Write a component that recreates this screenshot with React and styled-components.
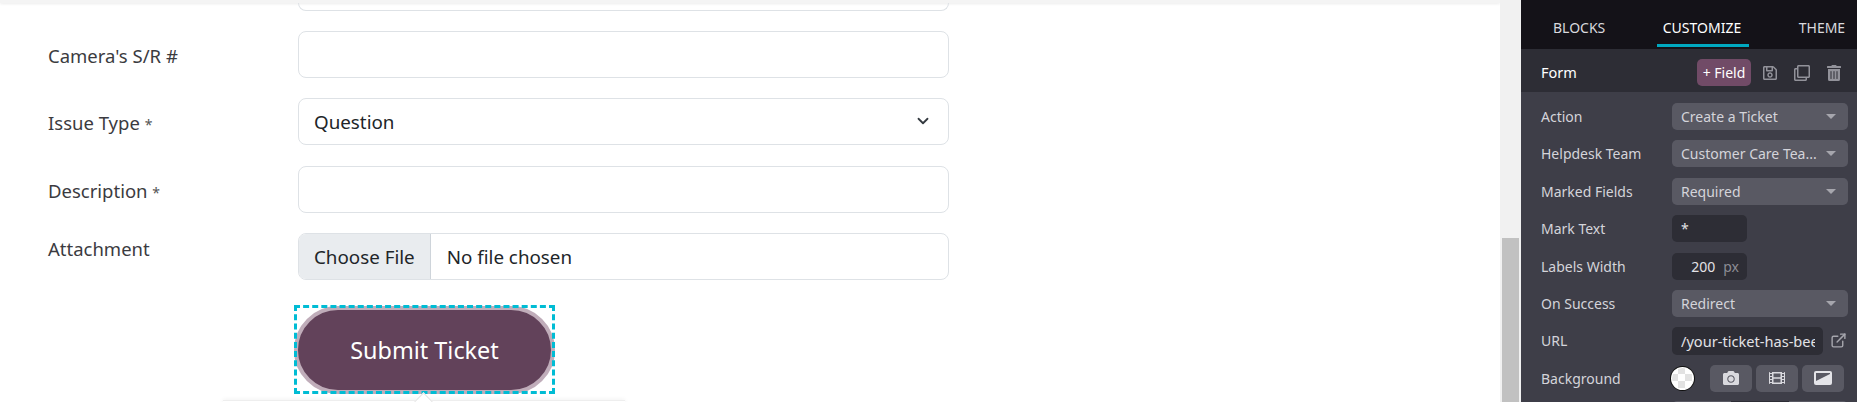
import React from 'react';
import styled, { createGlobalStyle } from 'styled-components';
import { ExternalLink, ChevronDown } from 'lucide-react';
import { FaRegSave, FaRegClone, FaTrashAlt, FaCamera, FaFilm } from 'react-icons/fa';

const Global = createGlobalStyle`
    html, body { margin: 0; padding: 0; background: #fff; }
    * { box-sizing: border-box; }
`;

const Page = styled.div`
    display: grid;
    grid-template-columns: 1fr 21px 336px;
    width: 1857px;
    height: 402px;
    overflow: hidden;
    font-family: 'Noto Sans', 'Open Sans', sans-serif;
`;

const Main = styled.div`
    position: relative;
    overflow: hidden;
    background: #fff;
`;

const TopBar = styled.div`
    height: 3px;
    background: #f4f4f4;
    box-shadow: 0 1px 3px rgba(0, 0, 0, 0.08);
`;

const Form = styled.div`
    display: flex;
    flex-direction: column;
    gap: 20.4px;
    padding-left: 48px;
`;

const Row = styled.div`
    display: flex;
    align-items: ${(p) => (p.$top ? 'flex-start' : 'center')};
    height: 47px;
`;

const Label = styled.div`
    width: 250px;
    font-size: 18.5px;
    color: #3b3b3f;
    padding-top: ${(p) => (p.$top ? '3px' : '2px')};

    span {
        font-size: 14px;
        color: #555;
    }
`;

const Cut = styled.div`
    width: 651px;
    height: 7.6px;
    margin-left: 250px;
    border: 1px solid #dee2e6;
    border-top: none;
    border-radius: 0 0 8px 8px;
`;

const Field = styled.div`
    width: 651px;
    height: 47px;
    display: flex;
    align-items: center;
    justify-content: space-between;
    padding: 1px 16px 0 15px;
    border: 1px solid #dee2e6;
    border-radius: 8px;
    font-size: 18.8px;
    color: #212529;
    overflow: hidden;

    svg {
        margin-top: -3px;
    }
`;

const FileField = styled(Field)`
    justify-content: flex-start;
    padding: 0;
`;

const FileButton = styled.div`
    height: 100%;
    display: flex;
    align-items: center;
    padding: 0 15px;
    background: #e9ecef;
    border-right: 1px solid #ced4da;
    margin-right: 16px;
`;

const ButtonRow = styled.div`
    padding: 25px 0 0 294px;
`;

const Dashed = styled.div`
    width: 261px;
    height: 89px;
    padding-top: 1px;
    outline: 3px dashed #00bcd4;
    outline-offset: -3px;
`;

const SubmitButton = styled.div`
    height: 100%;
    border: 4px solid #c0adba;
    border-radius: 44px;
    background: #62425a;
    color: #fff;
    font-size: 23.4px;
    display: flex;
    align-items: center;
    justify-content: center;
`;

const Popover = styled.div`
    position: absolute;
    left: 223px;
    top: 400px;
    width: 402px;
    height: 10px;
    background: #fff;
    border-top: 1px solid #eee;
    box-shadow: 0 -1px 4px rgba(0, 0, 0, 0.05);
`;

const Arrow = styled.div`
    position: absolute;
    left: 194px;
    top: -6px;
    width: 13px;
    height: 13px;
    background: #fff;
    border-top: 1px solid #e4e4e4;
    border-left: 1px solid #e4e4e4;
    transform: rotate(45deg);
`;

const Scrollbar = styled.div`
    display: flex;
    flex-direction: column;
    justify-content: flex-end;
    padding: 0 2px;
    background: #f1f1f1;
`;

const Thumb = styled.div`
    height: 164px;
    background: #c1c1c1;
`;

const Panel = styled.div`
    background: #3e3e48;
    color: #d9d9de;
    font-size: 14px;
    overflow: hidden;
`;

const Tabs = styled.div`
    height: 49px;
    display: flex;
    background: #141218;
    padding-left: 32px;
`;

const Tab = styled.div`
    position: relative;
    width: ${(p) => p.$w}px;
    padding-top: 18px;
    font-size: 14px;
    white-space: nowrap;
    color: ${(p) => (p.$active ? '#fff' : '#d9d9de')};

    ${(p) => p.$active && `
        &::after {
            content: '';
            position: absolute;
            left: -6px;
            bottom: 2px;
            width: 92px;
            height: 3px;
            background: #00a8c0;
        }
    `}
`;

const Header = styled.div`
    height: 43px;
    display: flex;
    align-items: center;
    padding: 4px 15px 0 20px;
    background: #2d2d35;
    color: #fff;
`;

const Title = styled.div`
    flex: 1;
    margin-top: -2px;
    font-size: 14.5px;
`;

const FieldButton = styled.div`
    width: 54px;
    height: 27px;
    display: flex;
    align-items: center;
    justify-content: center;
    margin-right: 11px;
    border-radius: 5px;
    background: #714b67;
    font-size: 14px;
`;

const HeadIcons = styled.div`
    display: flex;
    align-items: center;
    gap: 16px;
    color: #92929a;
`;

const Options = styled.div`
    display: flex;
    flex-direction: column;
    gap: 10.4px;
    padding: 11px 9px 0 20px;
`;

const Option = styled.div`
    display: flex;
    flex: none;
    align-items: center;
    height: 27px;
`;

const OptionLabel = styled.div`
    width: 131px;
    font-size: 14px;
    color: #d4d4da;
`;

const Select = styled.div`
    width: 176px;
    height: 27px;
    display: flex;
    align-items: center;
    justify-content: space-between;
    padding: 0 6px 0 9px;
    border-radius: 5px;
    background: #595963;
    color: #d4d4da;
    font-size: 14px;
    white-space: nowrap;
`;

const Caret = styled.i`
    width: 0;
    height: 0;
    margin-right: 6px;
    border-left: 5px solid transparent;
    border-right: 5px solid transparent;
    border-top: 5px solid #a6a6ad;
`;

const TextBox = styled.div`
    width: ${(p) => p.$w}px;
    height: 27px;
    display: flex;
    align-items: center;
    justify-content: ${(p) => (p.$end ? 'flex-end' : 'flex-start')};
    padding: 0 8px 0 9px;
    border-radius: 5px;
    background: #2d2d35;
    color: #e2e2e6;
    font-size: 14px;
    white-space: nowrap;

    small {
        margin-left: 8px;
        font-size: 14px;
        color: #8c8c94;
    }
`;

const UrlInput = styled.input`
    width: 151px;
    height: 28px;
    padding: 0 8px 0 9px;
    border: none;
    border-radius: 5px;
    background: #2d2d35;
    color: #e2e2e6;
    font: inherit;
    font-size: 14.6px;
    outline: none;
`;

const Link = styled.div`
    margin-left: 7px;
    display: flex;
    color: #a6a6ad;
`;

const Swatch = styled.div`
    width: 25px;
    height: 25px;
    margin-right: 15px;
    border: 1px solid #111;
    border-radius: 50%;
    background: conic-gradient(#e2e2e2 25%, #fff 0 50%, #e2e2e2 0 75%, #fff 0) 0 0 / 14px 14px;
    box-shadow: inset 0 0 0 1px #fff;
`;

const IconButton = styled.div`
    width: ${(p) => p.$w}px;
    height: 27px;
    display: flex;
    align-items: center;
    justify-content: center;
    margin-right: 4px;
    border-radius: 5px;
    background: #595963;
    color: #d9d9de;
`;

const Segments = styled.div`
    display: flex;
    flex: none;
    width: 176px;
    height: 27px;
    margin: -1px 0 0 131px;
    overflow: hidden;
    border-radius: 5px;
    background: #595963;
`;

const Segment = styled.div`
    flex: 1;
    background: ${(p) => (p.$active ? '#2d2d35' : 'transparent')};
`;

const GradientIcon = () => (
    <svg width="18" height="14" viewBox="0 0 18 14">
        <rect x="0" y="0" width="18" height="14" rx="2" fill="#e4e4e8" />
        <path d="M2 10 L16 3 L16 2 L2 2 Z" fill="#595963" />
    </svg>
);

const rows = [
    ['Action', 'Create a Ticket'],
    ['Helpdesk Team', 'Customer Care Tea...'],
    ['Marked Fields', 'Required'],
];

export default function App() {
    return (
        <Page>
            <Global />
            <Main>
                <TopBar />
                <Form>
                    <Cut />
                    <Row>
                        <Label>Camera's S/R #</Label>
                        <Field />
                    </Row>
                    <Row>
                        <Label>Issue Type <span>*</span></Label>
                        <Field>
                            Question
                            <ChevronDown size={18} strokeWidth={2.4} color="#343a40" />
                        </Field>
                    </Row>
                    <Row>
                        <Label>Description <span>*</span></Label>
                        <Field />
                    </Row>
                    <Row $top>
                        <Label $top>Attachment</Label>
                        <FileField>
                            <FileButton>Choose File</FileButton>
                            No file chosen
                        </FileField>
                    </Row>
                </Form>
                <ButtonRow>
                    <Dashed>
                        <SubmitButton>Submit Ticket</SubmitButton>
                    </Dashed>
                </ButtonRow>
                <Popover>
                    <Arrow />
                </Popover>
            </Main>
            <Scrollbar>
                <Thumb />
            </Scrollbar>
            <Panel>
                <Tabs>
                    <Tab $w={113}>BLOCKS</Tab>
                    <Tab $w={140} $active>CUSTOMIZE</Tab>
                    <Tab $w={60}>THEME</Tab>
                </Tabs>
                <Header>
                    <Title>Form</Title>
                    <FieldButton>+ Field</FieldButton>
                    <HeadIcons>
                        <FaRegSave size={16} />
                        <FaRegClone size={16} />
                        <FaTrashAlt size={16} />
                    </HeadIcons>
                </Header>
                <Options>
                    {rows.map(([label, value]) => (
                        <Option key={label}>
                            <OptionLabel>{label}</OptionLabel>
                            <Select>{value}<Caret /></Select>
                        </Option>
                    ))}
                    <Option>
                        <OptionLabel>Mark Text</OptionLabel>
                        <TextBox $w={75}>*</TextBox>
                    </Option>
                    <Option>
                        <OptionLabel>Labels Width</OptionLabel>
                        <TextBox $w={75} $end>200<small>px</small></TextBox>
                    </Option>
                    <Option>
                        <OptionLabel>On Success</OptionLabel>
                        <Select>Redirect<Caret /></Select>
                    </Option>
                    <Option>
                        <OptionLabel>URL</OptionLabel>
                        <UrlInput readOnly value="/your-ticket-has-been-submitted" />
                        <Link><ExternalLink size={17} /></Link>
                    </Option>
                    <Option>
                        <OptionLabel>Background</OptionLabel>
                        <Swatch />
                        <IconButton $w={43}><FaCamera size={16} /></IconButton>
                        <IconButton $w={42}><FaFilm size={16} /></IconButton>
                        <IconButton $w={43}><GradientIcon /></IconButton>
                    </Option>
                    <Segments>
                        <Segment />
                        <Segment $active />
                        <Segment />
                    </Segments>
                </Options>
            </Panel>
        </Page>
    );
}
